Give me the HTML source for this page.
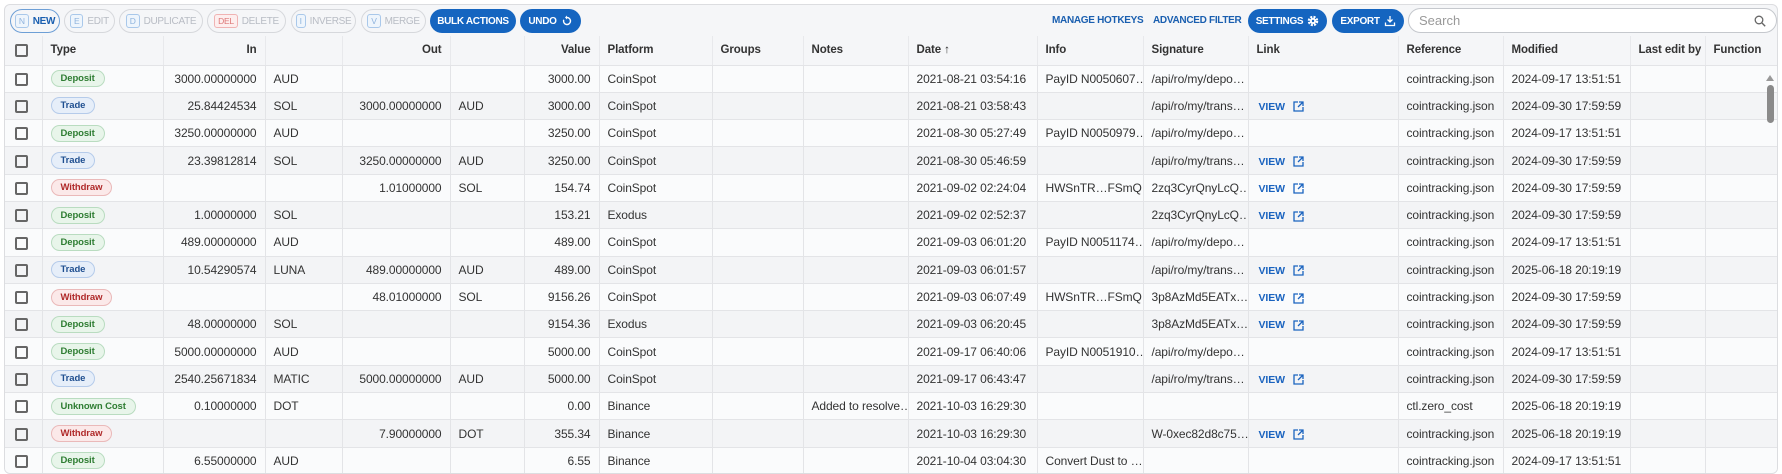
<!DOCTYPE html>
<html><head><meta charset="utf-8"><style>
*{box-sizing:border-box;margin:0;padding:0}
body{width:1782px;height:467px;overflow:hidden;background:#fff;font-family:"Liberation Sans",Arial,sans-serif;color:#333;position:relative}
.wrap{position:absolute;left:4px;top:4px;width:1774px;height:470px;border:1px solid #dcdde0;border-radius:6px;background:#f5f6f8;overflow:hidden}
.btn{position:absolute;top:4px;height:24px;border-radius:12px;font-size:10px;font-weight:bold;display:flex;align-items:center;justify-content:center;gap:4px;white-space:nowrap;letter-spacing:-0.3px}
.o{border:1px solid #d6d8dc;color:#b8bcc4;background:#f5f6f8;font-weight:normal}
.o.act{border-color:#6d9fd6;color:#1a5fb0;font-weight:bold}
.k{font-size:8.5px;border:1px solid #a9c8ea;border-radius:3px;padding:1px 3px;color:#8fb3dd;background:#eef5fc;font-weight:normal}
.k.r{border-color:#f0b3b3;color:#d77;background:#fdeeee}
.f{background:#1565c0;color:#fff}
.lnk{position:absolute;top:4px;height:24px;line-height:24px;font-size:10px;font-weight:bold;color:#1a5fb0;letter-spacing:-0.3px}
.search{position:absolute;top:3px;left:1403px;width:369px;height:25px;border:1px solid #c5c8cd;border-radius:13px;background:#fff;font-size:13px;color:#999;padding-left:10px;line-height:23px}
table{position:absolute;left:-1px;top:31px;border-collapse:collapse;table-layout:fixed;width:1774px;font-size:12px}
td,th{border-right:1px solid #e3e4e7;border-bottom:1px solid #e3e4e7;height:27.3px;padding:0 8px;white-space:nowrap;overflow:hidden;text-align:left;font-weight:normal;letter-spacing:-0.1px}
th{height:29px;background:#f5f6f8;font-weight:bold;color:#333;font-size:11.5px;border-right:1px solid #e8e9ec}
tr:nth-child(even) td{background:#fafbfc}
tr:nth-child(odd) td{background:#f3f4f6}
.r{text-align:right}
.cb{display:inline-block;width:13px;height:13px;border:2px solid #666;border-radius:2px;vertical-align:middle;margin-left:3px}
.b{display:inline-block;font-size:9.5px;font-weight:bold;padding:1px 9px;border-radius:9px;line-height:13px}
.dep{background:#e8f5ea;border:1px solid #b9dcc0;color:#2e7d32}
.tr{background:#e6eef9;border:1px solid #b5cbea;color:#1f4f90}
.wd{background:#fbe9e9;border:1px solid #eab9b9;color:#b02a2a}
.v{color:#1a63bf;font-weight:bold;font-size:10.5px;margin-left:2px;display:inline-flex;align-items:center;gap:8px}
</style></head><body>
<div class="wrap">
<div class="btn o act" style="left:5px;width:50px"><span class="k">N</span>NEW</div>
<div class="btn o" style="left:59px;width:51px"><span class="k">E</span>EDIT</div>
<div class="btn o" style="left:114px;width:84px"><span class="k">D</span>DUPLICATE</div>
<div class="btn o" style="left:202px;width:79px"><span class="k r">DEL</span>DELETE</div>
<div class="btn o" style="left:286px;width:65px"><span class="k">I</span>INVERSE</div>
<div class="btn o" style="left:356px;width:65px"><span class="k">V</span>MERGE</div>
<div class="btn f" style="left:425px;width:86px">BULK ACTIONS</div>
<div class="btn f" style="left:515px;width:61px">UNDO <svg width="12" height="12" viewBox="0 0 12 12"><path d="M6 2.5a3.5 3.5 0 1 1-3.3 2.3" fill="none" stroke="#fff" stroke-width="1.4"/><path d="M6 0.5v4l-2-2z" fill="#fff"/></svg></div>
<div class="lnk" style="left:1047px">MANAGE HOTKEYS</div>
<div class="lnk" style="left:1148px">ADVANCED FILTER</div>
<div class="btn f" style="left:1243px;width:79px">SETTINGS <svg width="12" height="12" viewBox="0 0 12 12"><circle cx="6" cy="6" r="4" fill="none" stroke="#fff" stroke-width="2.5" stroke-dasharray="2 1.2"/><circle cx="6" cy="6" r="3" fill="#fff"/><circle cx="6" cy="6" r="1.2" fill="#1565c0"/></svg></div>
<div class="btn f" style="left:1327px;width:72px">EXPORT <svg width="12" height="12" viewBox="0 0 12 12"><path d="M6 1v6M3.5 4.5L6 7l2.5-2.5M1.5 7.5v3h9v-3" fill="none" stroke="#fff" stroke-width="1.3"/></svg></div>
<div class="search">Search<svg style="position:absolute;right:10px;top:6px" width="12" height="12" viewBox="0 0 12 12"><circle cx="5" cy="5" r="3.8" fill="none" stroke="#666" stroke-width="1.3"/><path d="M8 8l3.2 3.2" stroke="#666" stroke-width="1.4"/></svg></div>
<table>
<colgroup><col style="width:38px"><col style="width:121px"><col style="width:102px"><col style="width:77px"><col style="width:108px"><col style="width:74px"><col style="width:75px"><col style="width:113px"><col style="width:91px"><col style="width:105px"><col style="width:129px"><col style="width:106px"><col style="width:105px"><col style="width:150px"><col style="width:105px"><col style="width:127px"><col style="width:75px"><col style="width:73px"></colgroup>
<tr><th><span class="cb"></span></th><th>Type</th><th class="r">In</th><th></th><th class="r">Out</th><th></th><th class="r">Value</th><th>Platform</th><th>Groups</th><th>Notes</th><th>Date &#8593;</th><th>Info</th><th>Signature</th><th>Link</th><th>Reference</th><th>Modified</th><th>Last edit by</th><th>Function</th></tr>
<tr><td><span class="cb"></span></td><td><span class="b dep">Deposit</span></td><td class="r">3000.00000000</td><td>AUD</td><td></td><td></td><td class="r">3000.00</td><td>CoinSpot</td><td></td><td></td><td>2021-08-21 03:54:16</td><td>PayID N0050607…</td><td>/api/ro/my/depo…</td><td></td><td>cointracking.json</td><td>2024-09-17 13:51:51</td><td></td><td></td></tr>
<tr><td><span class="cb"></span></td><td><span class="b tr">Trade</span></td><td class="r">25.84424534</td><td>SOL</td><td class="r">3000.00000000</td><td>AUD</td><td class="r">3000.00</td><td>CoinSpot</td><td></td><td></td><td>2021-08-21 03:58:43</td><td></td><td>/api/ro/my/trans…</td><td><span class="v">VIEW <svg width="11" height="11" viewBox="0 0 11 11"><path d="M5 1H1v9h9V6M6 1h4v4M10 1L5 6" fill="none" stroke="#1a63bf" stroke-width="1.3"/></svg></span></td><td>cointracking.json</td><td>2024-09-30 17:59:59</td><td></td><td></td></tr>
<tr><td><span class="cb"></span></td><td><span class="b dep">Deposit</span></td><td class="r">3250.00000000</td><td>AUD</td><td></td><td></td><td class="r">3250.00</td><td>CoinSpot</td><td></td><td></td><td>2021-08-30 05:27:49</td><td>PayID N0050979…</td><td>/api/ro/my/depo…</td><td></td><td>cointracking.json</td><td>2024-09-17 13:51:51</td><td></td><td></td></tr>
<tr><td><span class="cb"></span></td><td><span class="b tr">Trade</span></td><td class="r">23.39812814</td><td>SOL</td><td class="r">3250.00000000</td><td>AUD</td><td class="r">3250.00</td><td>CoinSpot</td><td></td><td></td><td>2021-08-30 05:46:59</td><td></td><td>/api/ro/my/trans…</td><td><span class="v">VIEW <svg width="11" height="11" viewBox="0 0 11 11"><path d="M5 1H1v9h9V6M6 1h4v4M10 1L5 6" fill="none" stroke="#1a63bf" stroke-width="1.3"/></svg></span></td><td>cointracking.json</td><td>2024-09-30 17:59:59</td><td></td><td></td></tr>
<tr><td><span class="cb"></span></td><td><span class="b wd">Withdraw</span></td><td></td><td></td><td class="r">1.01000000</td><td>SOL</td><td class="r">154.74</td><td>CoinSpot</td><td></td><td></td><td>2021-09-02 02:24:04</td><td>HWSnTR…FSmQ…</td><td>2zq3CyrQnyLcQ…</td><td><span class="v">VIEW <svg width="11" height="11" viewBox="0 0 11 11"><path d="M5 1H1v9h9V6M6 1h4v4M10 1L5 6" fill="none" stroke="#1a63bf" stroke-width="1.3"/></svg></span></td><td>cointracking.json</td><td>2024-09-30 17:59:59</td><td></td><td></td></tr>
<tr><td><span class="cb"></span></td><td><span class="b dep">Deposit</span></td><td class="r">1.00000000</td><td>SOL</td><td></td><td></td><td class="r">153.21</td><td>Exodus</td><td></td><td></td><td>2021-09-02 02:52:37</td><td></td><td>2zq3CyrQnyLcQ…</td><td><span class="v">VIEW <svg width="11" height="11" viewBox="0 0 11 11"><path d="M5 1H1v9h9V6M6 1h4v4M10 1L5 6" fill="none" stroke="#1a63bf" stroke-width="1.3"/></svg></span></td><td>cointracking.json</td><td>2024-09-30 17:59:59</td><td></td><td></td></tr>
<tr><td><span class="cb"></span></td><td><span class="b dep">Deposit</span></td><td class="r">489.00000000</td><td>AUD</td><td></td><td></td><td class="r">489.00</td><td>CoinSpot</td><td></td><td></td><td>2021-09-03 06:01:20</td><td>PayID N0051174…</td><td>/api/ro/my/depo…</td><td></td><td>cointracking.json</td><td>2024-09-17 13:51:51</td><td></td><td></td></tr>
<tr><td><span class="cb"></span></td><td><span class="b tr">Trade</span></td><td class="r">10.54290574</td><td>LUNA</td><td class="r">489.00000000</td><td>AUD</td><td class="r">489.00</td><td>CoinSpot</td><td></td><td></td><td>2021-09-03 06:01:57</td><td></td><td>/api/ro/my/trans…</td><td><span class="v">VIEW <svg width="11" height="11" viewBox="0 0 11 11"><path d="M5 1H1v9h9V6M6 1h4v4M10 1L5 6" fill="none" stroke="#1a63bf" stroke-width="1.3"/></svg></span></td><td>cointracking.json</td><td>2025-06-18 20:19:19</td><td></td><td></td></tr>
<tr><td><span class="cb"></span></td><td><span class="b wd">Withdraw</span></td><td></td><td></td><td class="r">48.01000000</td><td>SOL</td><td class="r">9156.26</td><td>CoinSpot</td><td></td><td></td><td>2021-09-03 06:07:49</td><td>HWSnTR…FSmQ…</td><td>3p8AzMd5EATx…</td><td><span class="v">VIEW <svg width="11" height="11" viewBox="0 0 11 11"><path d="M5 1H1v9h9V6M6 1h4v4M10 1L5 6" fill="none" stroke="#1a63bf" stroke-width="1.3"/></svg></span></td><td>cointracking.json</td><td>2024-09-30 17:59:59</td><td></td><td></td></tr>
<tr><td><span class="cb"></span></td><td><span class="b dep">Deposit</span></td><td class="r">48.00000000</td><td>SOL</td><td></td><td></td><td class="r">9154.36</td><td>Exodus</td><td></td><td></td><td>2021-09-03 06:20:45</td><td></td><td>3p8AzMd5EATx…</td><td><span class="v">VIEW <svg width="11" height="11" viewBox="0 0 11 11"><path d="M5 1H1v9h9V6M6 1h4v4M10 1L5 6" fill="none" stroke="#1a63bf" stroke-width="1.3"/></svg></span></td><td>cointracking.json</td><td>2024-09-30 17:59:59</td><td></td><td></td></tr>
<tr><td><span class="cb"></span></td><td><span class="b dep">Deposit</span></td><td class="r">5000.00000000</td><td>AUD</td><td></td><td></td><td class="r">5000.00</td><td>CoinSpot</td><td></td><td></td><td>2021-09-17 06:40:06</td><td>PayID N0051910…</td><td>/api/ro/my/depo…</td><td></td><td>cointracking.json</td><td>2024-09-17 13:51:51</td><td></td><td></td></tr>
<tr><td><span class="cb"></span></td><td><span class="b tr">Trade</span></td><td class="r">2540.25671834</td><td>MATIC</td><td class="r">5000.00000000</td><td>AUD</td><td class="r">5000.00</td><td>CoinSpot</td><td></td><td></td><td>2021-09-17 06:43:47</td><td></td><td>/api/ro/my/trans…</td><td><span class="v">VIEW <svg width="11" height="11" viewBox="0 0 11 11"><path d="M5 1H1v9h9V6M6 1h4v4M10 1L5 6" fill="none" stroke="#1a63bf" stroke-width="1.3"/></svg></span></td><td>cointracking.json</td><td>2024-09-30 17:59:59</td><td></td><td></td></tr>
<tr><td><span class="cb"></span></td><td><span class="b dep">Unknown Cost</span></td><td class="r">0.10000000</td><td>DOT</td><td></td><td></td><td class="r">0.00</td><td>Binance</td><td></td><td>Added to resolve…</td><td>2021-10-03 16:29:30</td><td></td><td></td><td></td><td>ctl.zero_cost</td><td>2025-06-18 20:19:19</td><td></td><td></td></tr>
<tr><td><span class="cb"></span></td><td><span class="b wd">Withdraw</span></td><td></td><td></td><td class="r">7.90000000</td><td>DOT</td><td class="r">355.34</td><td>Binance</td><td></td><td></td><td>2021-10-03 16:29:30</td><td></td><td>W-0xec82d8c75…</td><td><span class="v">VIEW <svg width="11" height="11" viewBox="0 0 11 11"><path d="M5 1H1v9h9V6M6 1h4v4M10 1L5 6" fill="none" stroke="#1a63bf" stroke-width="1.3"/></svg></span></td><td>cointracking.json</td><td>2025-06-18 20:19:19</td><td></td><td></td></tr>
<tr><td><span class="cb"></span></td><td><span class="b dep">Deposit</span></td><td class="r">6.55000000</td><td>AUD</td><td></td><td></td><td class="r">6.55</td><td>Binance</td><td></td><td></td><td>2021-10-04 03:04:30</td><td>Convert Dust to …</td><td></td><td></td><td>cointracking.json</td><td>2024-09-17 13:51:51</td><td></td><td></td></tr>
</table>
<div style="position:absolute;left:1761px;top:70px;width:0;height:0;border-left:4px solid transparent;border-right:4px solid transparent;border-bottom:6px solid #999"></div>
<div style="position:absolute;left:1762px;top:80px;width:7px;height:38px;border-radius:4px;background:#8a8a8a"></div>
</div>
</body></html>
